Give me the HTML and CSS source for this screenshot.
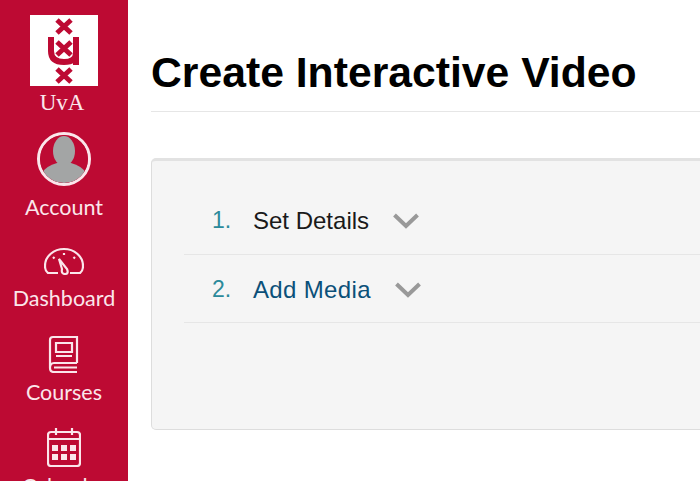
FILE: index.html
```html
<!DOCTYPE html>
<html lang="en">
<head>
    <meta charset="UTF-8">
    <meta name="viewport" content="width=device-width, initial-scale=1.0">
    <title>Create Interactive Video</title>
    <link rel="stylesheet" href="styles.css">
</head>
<body>
    <div class="page">
        <!-- Sidebar -->
        <nav class="sidebar">
            <div class="logo">
                <div class="logo-box">
                    <svg width="68" height="72" viewBox="0 0 68 72">
                        <g stroke="#bd0a33" stroke-width="5" fill="none">
                            <path d="M27 5 L41 18 M41 5 L27 18"/>
                            <path d="M27 27 L41 40 M41 27 L27 40"/>
                            <path d="M27 54 L41 67 M41 54 L27 67"/>
                            <path d="M21 22 V36 Q21 47 34 47 Q46 47 46 38 V22" stroke-width="6"/>
                            <path d="M46 38 V50" stroke-width="6"/>
                        </g>
                    </svg>
                </div>
                <div class="logo-name">UvA</div>
            </div>
            <a class="nav-item account">
                <span class="avatar">
                    <svg width="48" height="48" viewBox="0 0 48 48">
                        <circle cx="24" cy="24" r="24" fill="#bd0a33"/>
                        <ellipse cx="24" cy="16" rx="11" ry="15" fill="#a3a5a5"/>
                        <path d="M2 38 Q6 31 17 28 L31 28 Q42 31 46 38 Q37 48 24 48 Q11 48 2 38 Z" fill="#a3a5a5"/>
                    </svg>
                </span>
                <span class="nav-label">Account</span>
            </a>
            <a class="nav-item dashboard">
                <svg width="40" height="28" viewBox="0 0 40 28" class="nav-icon">
                    <path d="M14 26 H4 Q1 24 1 19 C1 9 10 2 20 2 C30 2 39 9 39 19 Q39 24 36 26 H26"/>
                    <path d="M15 12 L23 22 Q25 27 21 27 Q17 27 18 22 Z"/>
                    <path d="M20 6 V8 M9 10 L10.500 11.500 M31 10 L29.500 11.500"/>
                </svg>
                <span class="nav-label">Dashboard</span>
            </a>
            <a class="nav-item courses">
                <svg width="32" height="38" viewBox="0 0 32 38" class="nav-icon">
                    <path d="M29 28 V2 H5 Q2 2 2 5 V33 Q2 37 6 37 H29 M29 28 H6 Q2 28 2 33 M6 32.500 H29"/>
                    <path d="M8 8 H24 V17 H8 Z M8 21 H24"/>
                </svg>
                <span class="nav-label">Courses</span>
            </a>
            <a class="nav-item calendar">
                <svg width="34" height="40" viewBox="0 0 34 40" class="nav-icon">
                    <path d="M4 5 H30 Q33 5 33 8 V36 Q33 39 30 39 H4 Q1 39 1 36 V8 Q1 5 4 5 Z M1 12 H33 M9 1 V8 M25 1 V8"/>
                    <g class="cal-dots">
                        <rect x="5" y="18" width="6" height="6"/>
                        <rect x="14" y="18" width="6" height="6"/>
                        <rect x="23" y="18" width="6" height="6"/>
                        <rect x="5" y="27" width="6" height="6"/>
                        <rect x="14" y="27" width="6" height="6"/>
                        <rect x="23" y="27" width="6" height="6"/>
                    </g>
                </svg>
                <span class="nav-label">Calendar</span>
            </a>
        </nav>

        <!-- Main -->
        <main class="main">
            <h1 class="title">Create Interactive Video</h1>
            <div class="panel">
                <div class="step">
                    <span class="step-num">1.</span>
                    <span class="step-name">Set Details</span>
                    <svg class="chevron" width="26" height="16" viewBox="0 0 26 16"><path d="M1.500 2 L13 13 L24.500 2"/></svg>
                </div>
                <div class="step">
                    <span class="step-num">2.</span>
                    <span class="step-name link">Add Media</span>
                    <svg class="chevron" width="26" height="16" viewBox="0 0 26 16"><path d="M1.500 2 L13 13 L24.500 2"/></svg>
                </div>
            </div>
        </main>
    </div>
</body>
</html>
```
FILE: styles.css
```css
* { margin: 0; padding: 0; box-sizing: border-box; }
html, body { height: 100%; overflow: hidden; }
body { font-family: "Liberation Sans", Arial, sans-serif; background: white; }
.page { display: flex; height: 481px; overflow: hidden; }

/* Sidebar */
.sidebar { width: 128px; flex: none; background: #bd0a33; color: #fbe6eb; display: flex; flex-direction: column; align-items: center; overflow: hidden; font-family: Lato, sans-serif; }
.logo { padding-top: 15px; display: flex; flex-direction: column; align-items: center; }
.logo-box { width: 68px; height: 71px; background: white; display: flex; align-items: center; justify-content: center; }
.logo-name { font-family: "Liberation Serif", serif; font-size: 23px; line-height: 24px; margin-top: 5px; padding-right: 4px; }
.nav-item { display: flex; flex-direction: column; align-items: center; flex: none; }
.nav-label { font-size: 21.500px; line-height: 26px; }
.nav-icon { fill: none; stroke: #fbe6eb; stroke-width: 2.2; }
.cal-dots { fill: #fbe6eb; stroke: none; }

.account { margin-top: 17px; }
.avatar { width: 54px; height: 54px; border: 3px solid #fbe6eb; border-radius: 50%; overflow: hidden; display: block; background: #bd0a33; }
.avatar svg { display: block; }
.account .nav-label { margin-top: 8px; }
.dashboard { margin-top: 27px; }
.dashboard .nav-label { margin-top: 10px; }
.courses { margin-top: 24px; }
.courses .nav-label { margin-top: 6px; }
.calendar { margin-top: 22px; }
.calendar .nav-label { margin-top: 6px; }

/* Main */
.main { flex: 1; min-width: 0; padding-left: 23px; }
.title { font-size: 42.700px; line-height: 50px; font-weight: bold; color: #000; padding: 47px 0 14px; margin-bottom: 46px; border-bottom: 1px solid #e6e6e6; height: 112px; }
.panel { height: 272px; margin-right: -10px; background: #f5f5f5; border: 1px solid #ddd; border-top: 3px solid #e2e2e2; border-radius: 5px; padding: 26px 0 0 32px; }

/* Steps */
.step { display: flex; align-items: center; height: 68px; border-bottom: 1px solid #e6e6e6; font-size: 24px; }
.step + .step { padding-top: 2px; }
.step-num { width: 69px; padding-left: 28px; color: #2b8a9b; font-size: 23px; }
.step-name { color: #1a1a1a; }
.step-name.link { color: #0b5079; letter-spacing: 0.35px; }
.chevron { margin-left: 24px; fill: none; stroke: #999; stroke-width: 4; }
```
